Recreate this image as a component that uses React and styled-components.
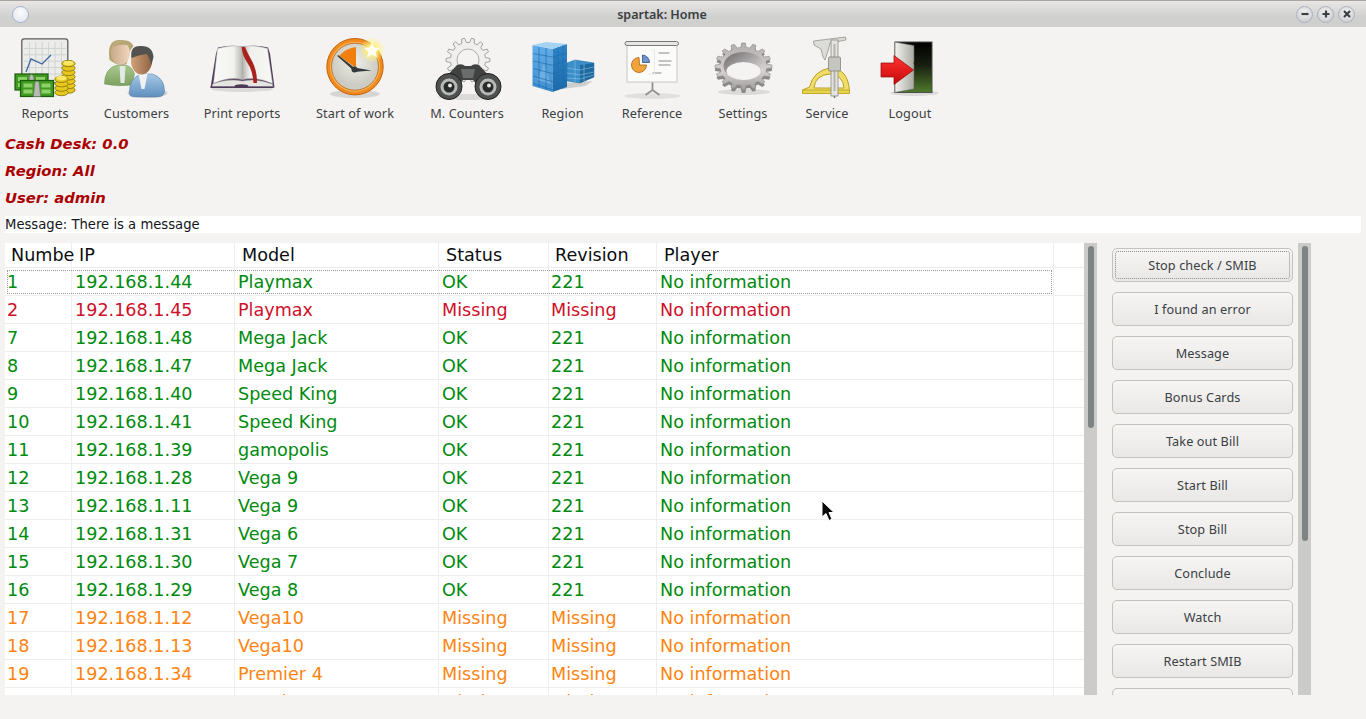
import React from 'react';
import styled, { createGlobalStyle } from 'styled-components';

const GlobalStyle = createGlobalStyle`
  html, body { margin: 0; padding: 0; background: #f5f3f1; }
`;

const gearPath = (cx, cy, rx, ry, teeth, depth) => {
  let d = '';
  const step = (Math.PI * 2) / teeth;
  for (let i = 0; i < teeth; i++) {
    const a = i * step;
    const pts = [
      [a - step * 0.3, 1 - depth],
      [a - step * 0.16, 1],
      [a + step * 0.16, 1],
      [a + step * 0.3, 1 - depth],
    ];
    pts.forEach(([t, r]) => {
      const x = cx + Math.cos(t) * rx * r;
      const y = cy + Math.sin(t) * ry * r;
      d += `${d ? 'L' : 'M'}${x.toFixed(1)} ${y.toFixed(1)}`;
    });
  }
  return d + 'Z';
};

const IconSvg = styled.svg`
  display: block;
  width: 80px;
  height: 68px;
  margin: 0 -40px;
  flex: none;
`;

const Icon = ({ cx, children }) => (
  <IconSvg viewBox={`${cx - 40} 34 80 68`}>{children}</IconSvg>
);

const Coins = ({ x, top, bottom, w }) => {
  const rings = [];
  for (let y = bottom; y >= top; y -= 4.4) {
    rings.push(<ellipse key={y} cx={x} cy={y} rx={w} ry={3.2} fill="#e8c81e" stroke="#8a7a10" strokeWidth="0.9" />);
  }
  return (
    <g>
      {rings}
      <ellipse cx={x} cy={top} rx={w - 1.5} ry={2.2} fill="#fbe866" />
    </g>
  );
};

const Cash = ({ x, y }) => (
  <g>
    <rect x={x} y={y} width="33" height="16" fill="#3f9a22" stroke="#1c5c0c" strokeWidth="1.2" />
    <rect x={x + 3} y={y + 3} width="9" height="4" fill="#8fd068" />
    <rect x={x + 21} y={y + 3} width="9" height="4" fill="#8fd068" />
    <rect x={x + 3} y={y + 9} width="9" height="4" fill="#8fd068" />
    <rect x={x + 21} y={y + 9} width="9" height="4" fill="#8fd068" />
    <path d={`M${x + 13} ${y + 16}l1.5 -14q2 -3 4 0l1.5 14z`} fill="#b9b9b5" stroke="#777" strokeWidth="0.6" />
  </g>
);

const ReportsIcon = () => {
  const grid = [];
  for (let i = 1; i < 7; i++) grid.push(<path key={`v${i}`} d={`M${23 + i * 6.4} 42V78`} stroke="#cfd3d0" strokeWidth="1" />);
  for (let i = 1; i < 6; i++) grid.push(<path key={`h${i}`} d={`M24 ${42 + i * 6.4}H66`} stroke="#cfd3d0" strokeWidth="1" />);
  return (
    <Icon cx={45}>
      <rect x="21.8" y="38.8" width="46" height="44" rx="2.5" fill="#ecedea" stroke="#5c5e5c" strokeWidth="1.3" />
      {grid}
      <path d="M26 72l5-13 11 5 9-9" fill="none" stroke="#3e65a6" strokeWidth="1.3" />
      <Coins x={68.5} top={63} bottom={90} w={6.6} />
      <Coins x={61.5} top={78} bottom={92.5} w={6.6} />
      <Cash x={15} y={74} />
      <Cash x={20.5} y={80.5} />
    </Icon>
  );
};

const CustomersIcon = () => (
  <Icon cx={136.5}>
    <defs>
      <linearGradient id="skinW" x1="0" x2="1"><stop offset="0" stopColor="#c9a98a" /><stop offset="1" stopColor="#f0d8be" /></linearGradient>
      <linearGradient id="skinM" x1="0" x2="1"><stop offset="0" stopColor="#d3a27a" /><stop offset="1" stopColor="#8f6242" /></linearGradient>
      <linearGradient id="bodyM" x1="0" y1="0" x2="0" y2="1"><stop offset="0" stopColor="#a6c8e6" /><stop offset="1" stopColor="#5f8fbe" /></linearGradient>
      <linearGradient id="bodyW" x1="0" y1="0" x2="0" y2="1"><stop offset="0" stopColor="#a8c98e" /><stop offset="1" stopColor="#7ca05f" /></linearGradient>
    </defs>
    <ellipse cx="147" cy="93" rx="20" ry="5" fill="#000" opacity="0.14" />
    <path d="M104 84q0-16 13-19h8q7 2 9 9l-3 11q-14 2-27-1z" fill="url(#bodyW)" stroke="#6d8c55" strokeWidth="0.5" />
    <path d="M119 66h6l-1 17h-4z" fill="#e2e8e2" />
    <path d="M109 60q-3-20 10-20 11-1 14 6l-3 4-4 14q-8 3-17-4z" fill="#b6a673" />
    <ellipse cx="120" cy="53" rx="9.5" ry="11.5" fill="url(#skinW)" />
    <path d="M112 47q6-7 15-5l4 4q-10-3-19 1z" fill="#b6a673" />
    <path d="M129 94q-1-15 11-20h12q12 4 12 17 0 6-8 6h-20q-7 0-7-3z" fill="url(#bodyM)" stroke="#55799e" strokeWidth="0.5" />
    <path d="M138 74h9l-3 15h-3z" fill="#eef2f2" />
    <ellipse cx="141" cy="61" rx="10.5" ry="13.5" fill="url(#skinM)" />
    <path d="M131 58q-2-13 10-12 11 0 12 11l-2 8q-2-8-5-11-8 1-15 4z" fill="#53524f" />
  </Icon>
);

const PrintIcon = () => (
  <Icon cx={242}>
    <defs>
      <linearGradient id="pageL" x1="0" x2="1"><stop offset="0" stopColor="#fafaf8" /><stop offset="0.7" stopColor="#f1f1ee" /><stop offset="1" stopColor="#b4b4af" /></linearGradient>
      <linearGradient id="pageR" x1="0" x2="1"><stop offset="0" stopColor="#b4b4af" /><stop offset="0.25" stopColor="#efefec" /><stop offset="1" stopColor="#f8f8f6" /></linearGradient>
    </defs>
    <ellipse cx="242" cy="89" rx="31" ry="3" fill="#000" opacity="0.1" />
    <path d="M210.500 87.500l5.500-34 2-6q12-3 24-1 14-2 26 1l2 6 4.500 34z" fill="#4c3a58" />
    <path d="M217.500 48.500q13-4 25-2v33q-14-3-29 4z" fill="url(#pageL)" stroke="#b4b2ae" strokeWidth="0.5" />
    <path d="M242.500 46.500q13-2 25 2l5 35q-15-7-30-4z" fill="url(#pageR)" stroke="#b4b2ae" strokeWidth="0.5" />
    <path d="M212.500 84q15-6 30-3 14-3 30 3l.5 2.500h-61z" fill="#e6e5e1" stroke="#8d8790" strokeWidth="0.5" />
    <path d="M241.500 47q1 9 6 16t6 20h3.500q0-13-5-22t-7-14z" fill="#a8211f" />
    <ellipse cx="241.500" cy="86" rx="7" ry="1.800" fill="#4c3a58" />
    <path d="M210.500 86.800h63v1.200h-63z" fill="#4c3a58" />
  </Icon>
);

const ClockIcon = () => (
  <Icon cx={355}>
    <defs>
      <radialGradient id="glow"><stop offset="0.3" stopColor="#fff27a" /><stop offset="1" stopColor="#fff27a" stopOpacity="0" /></radialGradient>
      <radialGradient id="face" cx="0.5" cy="0.4"><stop offset="0" stopColor="#eeeee8" /><stop offset="1" stopColor="#ccccc4" /></radialGradient>
    </defs>
    <ellipse cx="355" cy="94" rx="25" ry="4" fill="#000" opacity="0.12" />
    <circle cx="355" cy="66.700" r="28.200" fill="#f08a1c" stroke="#c4620c" strokeWidth="1" />
    <circle cx="355" cy="66.700" r="25" fill="#f8b45c" />
    <circle cx="355" cy="66.700" r="23.500" fill="url(#face)" stroke="#b86410" strokeWidth="0.8" />
    <path d="M356 68V47q-10 1-17 9z" fill="#f17f0e" />
    <path d="M356 69L338 55l-.7 1L354 71z" fill="#33393a" />
    <path d="M354 67.500l17.500 3-17.500 1.500z" fill="#33393a" />
    <circle cx="354.500" cy="69.500" r="3" fill="#33393a" />
    <circle cx="372" cy="50" r="13" fill="url(#glow)" />
    <path d="M372 42l2.300 5.500 5.700.5-4.300 3.700 1.300 5.700-5-3-5 3 1.300-5.700-4.300-3.700 5.700-.5z" fill="#fffdf0" />
  </Icon>
);

const CountersIcon = () => (
  <Icon cx={466}>
    <path d={gearPath(467, 60, 22, 22, 14, 0.2)} fill="#f0efed" stroke="#9a9a98" strokeWidth="0.9" />
    <circle cx="467" cy="60" r="11" fill="#f5f3f1" stroke="#a5a5a3" strokeWidth="0.9" />
    <ellipse cx="467" cy="97" rx="30" ry="3" fill="#000" opacity="0.1" />
    <path d="M456 65q5-2 8 1h6q3-3 8-1l13 14-12 9-7-8h-10l-7 8-12-9z" fill="#3f4241" />
    <path d="M460 69h14l-2 9h-10z" fill="#6a6d6c" />
    <circle cx="448" cy="86.500" r="13" fill="#4e5150" stroke="#1f2120" strokeWidth="1" />
    <circle cx="487" cy="86.500" r="13" fill="#4e5150" stroke="#1f2120" strokeWidth="1" />
    <circle cx="448" cy="87" r="8.500" fill="#b8bab8" />
    <circle cx="487" cy="87" r="8.500" fill="#b8bab8" />
    <circle cx="448" cy="87" r="5.500" fill="#2a2c2b" />
    <circle cx="487" cy="87" r="5.500" fill="#2a2c2b" />
    <circle cx="449" cy="85.500" r="2" fill="#e8e8e6" />
    <circle cx="488" cy="85.500" r="2" fill="#e8e8e6" />
  </Icon>
);

const RegionIcon = () => {
  const lines = [];
  for (let i = 1; i < 6; i++) lines.push(<path key={i} d={`M530 ${46 + i * 7.500}L550 ${49 + i * 8.200}`} stroke="#1f6fb0" strokeWidth="0.7" />);
  for (let i = 1; i < 6; i++) lines.push(<path key={`s${i}`} d={`M550 ${49 + i * 8.200}L564 ${45 + i * 7.800}`} stroke="#1f6fb0" strokeWidth="0.7" />);
  return (
    <Icon cx={560}>
      <defs>
        <linearGradient id="bldgA" x1="0" y1="0" x2="0" y2="1"><stop offset="0" stopColor="#63aee8" /><stop offset="1" stopColor="#3f8fd0" /></linearGradient>
        <linearGradient id="bldgB" x1="0" y1="0" x2="0" y2="1"><stop offset="0" stopColor="#2f85c8" /><stop offset="1" stopColor="#1d6aa8" /></linearGradient>
      </defs>
      <path d="M560 83l30-2-8 5-22 3z" fill="#000" opacity="0.15" />
      <path d="M564 63l8-3 19 3v14l-14 6-13-2z" fill="#3a8fc8" stroke="#1f6a9e" strokeWidth="0.5" />
      <path d="M577 65l14-2v14l-14 6z" fill="#1f6aa0" />
      <path d="M564 68l13 2 14-3M564 73l13 2 14-3M564 78l13 1 14-4M572 60v22M581 64v17" stroke="#9ccbeb" strokeWidth="0.5" fill="none" />
      <path d="M529.500 45l20 4v43l-20-6z" fill="url(#bldgA)" />
      <path d="M549.500 49l14.500-5v43l-14.500 5z" fill="url(#bldgB)" />
      <path d="M529.500 45l14-3 20.500 2-14.500 5z" fill="#a5d3f2" />
      <path d="M534 80l7-16 7 20z" fill="#8cc0e8" opacity="0.55" />
      {lines}
      <path d="M536 47v40M543 48v42M555 47v43M560 45v44" stroke="#1f6fb0" strokeWidth="0.7" />
    </Icon>
  );
};

const ReferenceIcon = () => (
  <Icon cx={649.5}>
    <ellipse cx="650" cy="96" rx="28" ry="3" fill="#000" opacity="0.08" />
    <path d="M650 82v9M650 90l-7 5M650 90l7 5" stroke="#8f9290" strokeWidth="1.800" fill="none" />
    <rect x="624.500" y="43" width="50" height="39" fill="#fbfbfa" stroke="#c6c6c3" strokeWidth="1" />
    <rect x="622.500" y="41.500" width="53.500" height="4" rx="2" fill="#e6e6e3" stroke="#6c6c6a" strokeWidth="0.9" />
    <path d="M644 65a7.500 7.500 0 1 1-7.500-7.500l.5 7.500z" fill="#f2a43c" stroke="#b86c18" strokeWidth="0.9" />
    <path d="M640 55a7.500 7.500 0 0 1 7 7.500h-7z" fill="#6f93cc" stroke="#3c5c96" strokeWidth="0.9" />
    <path d="M656 53h11M656 61h13M656 65h12M650 73h9" stroke="#8c8c8a" strokeWidth="1.200" fill="none" />
    <path d="M648 50h4v24h-6" stroke="#e6e6e4" strokeWidth="0.9" fill="none" />
  </Icon>
);

const SettingsIcon = () => (
  <Icon cx={739}>
    <defs>
      <linearGradient id="steel" x1="0" y1="0" x2="0" y2="1"><stop offset="0" stopColor="#b2aeae" /><stop offset="0.6" stopColor="#d6d0d0" /><stop offset="1" stopColor="#a09d9d" /></linearGradient>
      <linearGradient id="steelHole" x1="0" y1="0" x2="1" y2="1"><stop offset="0" stopColor="#6a6868" /><stop offset="1" stopColor="#efeded" /></linearGradient>
    </defs>
    <ellipse cx="740" cy="92" rx="26" ry="3" fill="#000" opacity="0.1" />
    <path d={gearPath(739.500, 69.500, 28.500, 23.500, 16, 0.18)} fill="#8a8888" />
    <path d={gearPath(739.500, 66.500, 28.500, 23.500, 16, 0.18)} fill="url(#steel)" stroke="#8a8888" strokeWidth="0.6" />
    <ellipse cx="739.500" cy="66" rx="20" ry="14" fill="url(#steelHole)" />
    <ellipse cx="739.500" cy="71" rx="17" ry="9" fill="#f5f3f1" />
  </Icon>
);

const ServiceIcon = () => (
  <Icon cx={822}>
    <path d="M797.500 93v-3l7-3q4-16 20-19 19 0 20 24v1z" fill="#f0dc6a" stroke="#b8a21c" strokeWidth="1" />
    <path d="M809 88q1-13 16-14 13 1 14 14z" fill="#f5f3f1" stroke="#b8a21c" strokeWidth="1" />
    <path d="M797.500 90h47v3.500h-47z" fill="#e8d34e" stroke="#b8a21c" strokeWidth="0.8" />
    <path d="M808.500 41l32-4 .5 3-16 3-2 8-3 9-2-3-2-8-7-4z" fill="#dcdcd8" stroke="#8a8a84" strokeWidth="0.7" />
    <rect x="826" y="40" width="7" height="56" fill="#e4e4e0" stroke="#8a8a84" strokeWidth="0.8" />
    <rect x="828.500" y="44" width="2" height="47" fill="#b4b4ad" />
    <rect x="823.500" y="57" width="12" height="14" rx="1" fill="#c6c6c0" stroke="#7a7a74" strokeWidth="0.7" />
    <path d="M829.500 96v2" stroke="#76766f" strokeWidth="1.500" />
  </Icon>
);

const LogoutIcon = () => (
  <Icon cx={903.5}>
    <defs>
      <linearGradient id="doorIn" x1="0" y1="0" x2="0" y2="1"><stop offset="0" stopColor="#000" /><stop offset="0.45" stopColor="#171d10" /><stop offset="1" stopColor="#4f7a2c" /></linearGradient>
      <linearGradient id="doorLeaf" x1="0" x2="1"><stop offset="0" stopColor="#f2f2ef" /><stop offset="1" stopColor="#a9a9a2" /></linearGradient>
      <linearGradient id="arrowRed" x1="0" y1="0" x2="0" y2="1"><stop offset="0" stopColor="#f33" /><stop offset="1" stopColor="#c80808" /></linearGradient>
    </defs>
    <ellipse cx="908" cy="93" rx="24" ry="3" fill="#000" opacity="0.1" />
    <rect x="888.500" y="42" width="37" height="50.500" fill="url(#doorIn)" stroke="#4a4d48" strokeWidth="1" />
    <path d="M888.500 42l19 3.500v43.500l-19 3.500z" fill="url(#doorLeaf)" stroke="#5c5e58" strokeWidth="0.6" />
    <circle cx="908" cy="63" r="1" fill="#222" />
    <path d="M874.500 63h13v-7.500L907 70l-19.500 14.500V77h-13z" fill="url(#arrowRed)" stroke="#8f0a0a" strokeWidth="0.7" />
  </Icon>
);

// label, icon, width of the toolbar item
const tools = [
  ['Reports', ReportsIcon, 48],
  ['Customers', CustomersIcon, 65],
  ['Print reports', PrintIcon, 76],
  ['Start of work', ClockIcon, 80],
  ['M. Counters', CountersIcon, 74],
  ['Region', RegionIcon, 47],
  ['Reference', ReferenceIcon, 62],
  ['Settings', SettingsIcon, 50],
  ['Service', ServiceIcon, 48],
  ['Logout', LogoutIcon, 48],
];

const ok = 'ok';
const rows = [
  ['1', '192.168.1.44', 'Playmax', ok],
  ['2', '192.168.1.45', 'Playmax', 'lost'],
  ['7', '192.168.1.48', 'Mega Jack', ok],
  ['8', '192.168.1.47', 'Mega Jack', ok],
  ['9', '192.168.1.40', 'Speed King', ok],
  ['10', '192.168.1.41', 'Speed King', ok],
  ['11', '192.168.1.39', 'gamopolis', ok],
  ['12', '192.168.1.28', 'Vega 9', ok],
  ['13', '192.168.1.11', 'Vega 9', ok],
  ['14', '192.168.1.31', 'Vega 6', ok],
  ['15', '192.168.1.30', 'Vega 7', ok],
  ['16', '192.168.1.29', 'Vega 8', ok],
  ['17', '192.168.1.12', 'Vega10', 'off'],
  ['18', '192.168.1.13', 'Vega10', 'off'],
  ['19', '192.168.1.34', 'Premier 4', 'off'],
  ['20', '192.168.1.35', 'Vegal', 'off'],
];

const buttons = [
  'Stop check / SMIB',
  'I found an error',
  'Message',
  'Bonus Cards',
  'Take out Bill',
  'Start Bill',
  'Stop Bill',
  'Conclude',
  'Watch',
  'Restart SMIB',
  '',
];

const Page = styled.div`
  position: relative;
  width: 1366px;
  height: 719px;
  overflow: hidden;
  background: #f5f3f1;
  font-family: "DejaVu Sans", sans-serif;
`;

const TitleBar = styled.header`
  height: 26px;
  box-sizing: content-box;
  border-top: 1px solid #aaa49e;
  display: flex;
  align-items: center;
  justify-content: space-between;
  padding: 0 11px 0 12px;
  background: linear-gradient(#e8e7e5, #d0d0cf 60%, #cfcfce);
`;

const Title = styled.span`
  position: absolute;
  left: 0;
  right: 42px;
  top: 7px;
  text-align: center;
  font: 600 12.5px/16px "Noto Sans", sans-serif;
  color: #3a3f41;
`;

const Orb = styled.span`
  width: 15px;
  height: 15px;
  border-radius: 50%;
  border: 1px solid #a6b3cc;
  background: radial-gradient(circle at 50% 35%, #fbfbfd, #dfe3ea);
`;

const WinButtons = styled.div`
  display: flex;
  gap: 4px;
`;

const WinButton = styled.span`
  width: 15px;
  height: 15px;
  border-radius: 50%;
  border: 1px solid #a9b2c2;
  background: radial-gradient(circle at 50% 35%, #f2f2f2, #c4c6c9);
  display: flex;
  align-items: center;
  justify-content: center;
`;

const WinGlyph = styled.svg`
  width: 10px;
  height: 10px;
  stroke: #3c3f42;
  stroke-width: 2.2;
  fill: none;
`;

const Toolbar = styled.nav`
  height: 103px;
  box-sizing: border-box;
  display: flex;
  gap: 35px;
  padding: 7px 0 0 21px;
`;

const Tool = styled.div`
  width: ${(p) => p.$width}px;
  flex: none;
  display: flex;
  flex-direction: column;
  align-items: center;
`;

const ToolLabel = styled.span`
  margin-top: 3px;
  font: 12.700px/16px "Noto Sans", sans-serif;
  letter-spacing: 0.1px;
  color: #3b4043;
  white-space: nowrap;
`;

const InfoLine = styled.div`
  padding-left: 5px;
  font: italic bold 14.800px/27px "DejaVu Sans", sans-serif;
  color: #ab0000;
`;

const MessageBar = styled.div`
  margin: 5px 5px 0;
  height: 17px;
  background: #fff;
  font: 13.200px/17px "DejaVu Sans", sans-serif;
  color: #14161a;
`;

const Main = styled.main`
  display: flex;
  height: 452px;
  margin: 10px 0 0 5px;
`;

const Table = styled.div`
  width: 1079px;
  overflow: hidden;
  background: #fff;
`;

const Row = styled.div`
  position: relative;
  display: grid;
  grid-template-columns: 67px 163px 204px 110px 108px 397px 30px;
  height: ${(p) => (p.$head ? 24 : 28)}px;
  border-bottom: 1px solid #eeeeee;
  box-sizing: ${(p) => (p.$head ? 'content-box' : 'border-box')};
  color: ${(p) => ({ ok: '#008a0e', lost: '#cf0f2a', off: '#ff8411' })[p.$state] || '#0b0d10'};

  ${(p) => p.$focus && `
    &::after {
      content: '';
      position: absolute;
      left: 2px;
      right: 32px;
      top: 2px;
      bottom: 1px;
      border: 1px dotted #999;
      pointer-events: none;
    }
  `}
`;

const Cell = styled.div`
  border-right: 1px solid #eeeeee;
  font: 17.600px/29px "DejaVu Sans", sans-serif;
  white-space: nowrap;
  overflow: hidden;
  padding-left: ${(p) => (p.$narrow ? 2 : 3)}px;
  &:last-child { border-right: 0; }
`;

const HeadCell = styled(Cell)`
  line-height: 24px;
  overflow: visible;
  padding-left: ${(p) => (p.$narrow ? 6 : 7)}px;
`;

const Track = styled.div`
  width: 13px;
  flex: none;
  background: #cbcbc9;
  box-sizing: border-box;
  padding: 3px 3px 0 4px;
`;

const Thumb = styled.div`
  height: ${(p) => p.$size}px;
  border-radius: 3px;
  background: #7f8383;
`;

const Side = styled.aside`
  width: 201px;
  flex: none;
  overflow: hidden;
  display: flex;
  flex-direction: column;
  gap: 10px;
  padding: 5px 0 0 15px;
  box-sizing: border-box;
`;

const Button = styled.button`
  position: relative;
  width: 181px;
  height: 34px;
  flex: none;
  padding: 0;
  border: 1px solid #c5c1bb;
  border-radius: 5px;
  background: linear-gradient(#f6f5f4, #e9e8e6);
  font: 12.700px/16px "Noto Sans", sans-serif;
  letter-spacing: 0.1px;
  color: #3b4043;

  ${(p) => p.$focus && `
    &::after {
      content: '';
      position: absolute;
      inset: 2px;
      border: 1px dotted #8c8c8c;
      border-radius: 3px;
    }
  `}
`;

const Pointer = styled.svg`
  position: absolute;
  left: 819px;
  top: 499px;
  width: 18px;
  height: 24px;
`;

const App = () => (
  <Page>
    <GlobalStyle />
    <TitleBar>
      <Orb />
      <Title>spartak: Home</Title>
      <WinButtons>
        <WinButton>
          <WinGlyph viewBox="0 0 10 10"><path d="M1.500 5h7" /></WinGlyph>
        </WinButton>
        <WinButton>
          <WinGlyph viewBox="0 0 10 10"><path d="M1.500 5h7M5 1.500v7" /></WinGlyph>
        </WinButton>
        <WinButton>
          <WinGlyph viewBox="0 0 10 10"><path d="M2 2l6 6M8 2l-6 6" /></WinGlyph>
        </WinButton>
      </WinButtons>
    </TitleBar>

    <Toolbar>
      {tools.map(([label, ToolIcon, width]) => (
        <Tool key={label} $width={width}>
          <ToolIcon />
          <ToolLabel>{label}</ToolLabel>
        </Tool>
      ))}
    </Toolbar>

    <InfoLine>Cash Desk: 0.0</InfoLine>
    <InfoLine>Region: All</InfoLine>
    <InfoLine>User: admin</InfoLine>
    <MessageBar>Message: There is a message</MessageBar>

    <Main>
      <Table>
        <Row $head>
          <HeadCell $narrow>Numbe</HeadCell>
          <HeadCell>IP</HeadCell>
          <HeadCell>Model</HeadCell>
          <HeadCell>Status</HeadCell>
          <HeadCell $narrow>Revision</HeadCell>
          <HeadCell>Player</HeadCell>
          <HeadCell />
        </Row>
        {rows.map(([num, ip, model, state], i) => (
          <Row key={num} $state={state} $focus={i === 0}>
            <Cell $narrow>{num}</Cell>
            <Cell>{ip}</Cell>
            <Cell>{model}</Cell>
            <Cell>{state === ok ? 'OK' : 'Missing'}</Cell>
            <Cell $narrow>{state === ok ? '221' : 'Missing'}</Cell>
            <Cell>No information</Cell>
            <Cell />
          </Row>
        ))}
      </Table>
      <Track><Thumb $size={182} /></Track>
      <Side>
        {buttons.map((label, i) => (
          <Button key={i} $focus={i === 0}>{label}</Button>
        ))}
      </Side>
      <Track><Thumb $size={295} /></Track>
    </Main>

    <Pointer viewBox="0 0 18 24">
      <path d="M3 2v16l4-3.500 3 7 3-1.300-3-6.700h5z" fill="#0a0a0a" stroke="#fff" strokeWidth="1" />
    </Pointer>
  </Page>
);

export default App;
